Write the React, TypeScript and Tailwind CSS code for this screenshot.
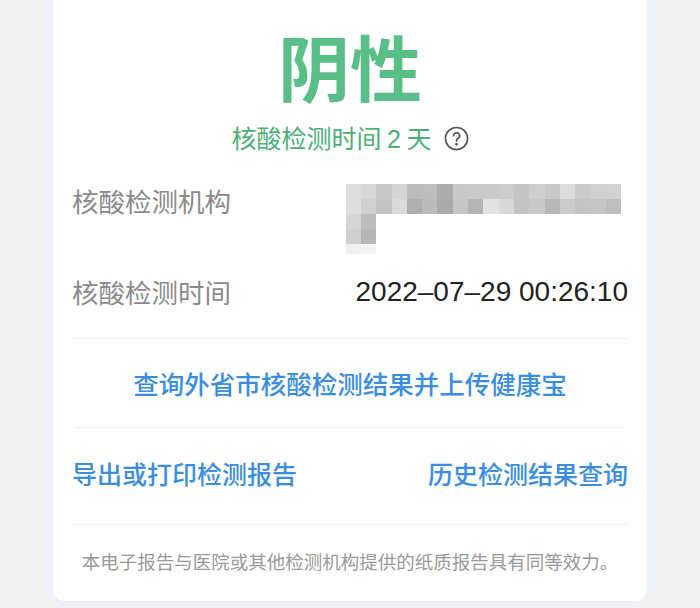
const cjk = { fontFamily: '"Noto Sans CJK SC", "Noto Sans", sans-serif' };
const latin = { fontFamily: '"Liberation Sans", Arial, sans-serif' };

const mosaicTop = [
  ["#dcdcdc", "#d8d8d8", "#c8c8c8", "#d4d4d4", "#bcbcbc", "#bdbdbd", "#acacac", "#c8c8c8", "#c9c9c9", "#cacaca", "#cccccc", "#c4c4c4", "#cfcfcf", "#c8c8c8", "#dcdcdc", "#cacaca", "#d0d0d0", "#d2d2d2"],
  ["#dedede", "#d0d0d0", "#c4c4c4", "#dadada", "#aeaeae", "#bbbbbb", "#aaaaaa", "#c6c6c6", "#b4b4b4", "#e2e2e2", "#d8d8d8", "#c4c4c4", "#c8c8c8", "#b8b8b8", "#cbcbcb", "#c4c4c4", "#c6c6c6", "#bdbdbd"],
];
const mosaicLeft = [
  ["#d6d6d6", "#bcbcbc"],
  ["#cfcfcf", "#b6b6b6"],
];

function Mosaic() {
  return (
    <div className="flex flex-col">
      {mosaicTop.map((row, i) => (
        <div key={i} className="flex">
          {row.map((c, j) => (
            <div key={j} className="h-[15px] w-[15.3px]" style={{ backgroundColor: c }} />
          ))}
        </div>
      ))}
      {mosaicLeft.map((row, i) => (
        <div key={i} className="flex">
          {row.map((c, j) => (
            <div key={j} className="h-[15px] w-[15.3px]" style={{ backgroundColor: c }} />
          ))}
        </div>
      ))}
      <div className="flex">
        <div className="h-[10px] w-[15.3px] bg-[#f0f0f0]" />
        <div className="h-[10px] w-[15.3px] bg-[#f3f3f3]" />
      </div>
    </div>
  );
}

function HelpIcon() {
  return (
    <svg width="25" height="25" viewBox="0 0 24 24" fill="none" stroke="#555" strokeWidth="1.6" strokeLinecap="round">
      <circle cx="12" cy="12" r="10.6" />
      <path d="M9.2 9.3a2.9 2.9 0 1 1 4.2 2.6c-.9.5-1.4 1.1-1.4 2.1v.5" />
      <circle cx="12" cy="17.6" r="0.6" fill="#555" />
    </svg>
  );
}

export default function App() {
  return (
    <div className="h-[608px] w-full overflow-hidden bg-[#f0f0f0]" style={cjk}>
      <div className="mx-[43px] rounded-b-[20px] bg-[#eef0f6] px-[10px] pb-[5px]">
        <div className="flex flex-col rounded-b-[12px] bg-white px-[19px]">
          <div className="pt-[29px] text-center text-[72px] font-bold leading-[72px] text-[#5abf87]">阴性</div>

          <div className="mt-[20px] flex items-center justify-center gap-[12px] text-[25px] leading-[32px] text-[#4dae77]">
            <span>
              核酸检测时间 <span style={latin}>2</span> 天
            </span>
            <HelpIcon />
          </div>

          <div className="mt-[28px] flex justify-between">
            <span className="text-[26.5px] leading-[36px] text-[#8a8a8a]">核酸检测机构</span>
            <div className="pr-[7px] pt-[1px]">
              <Mosaic />
            </div>
          </div>

          <div className="mt-[20px] flex items-center justify-between">
            <span className="text-[26.5px] leading-[36px] text-[#8a8a8a]">核酸检测时间</span>
            <span className="text-[28px] leading-[36px] text-[#222]" style={latin}>
              2022–07–29 00:26:10
            </span>
          </div>

          <div className="mt-[28px] h-px bg-[#f0f0f0]" />

          <div className="flex h-[88px] items-center justify-center text-[25.5px] font-medium text-[#3a8de0]">
            查询外省市核酸检测结果并上传健康宝
          </div>

          <div className="mx-[3px] h-px bg-[#f0f0f0]" />

          <div className="flex h-[96px] items-center justify-between pb-[5px] text-[25px] font-medium text-[#3a8de0]">
            <span>导出或打印检测报告</span>
            <span>历史检测结果查询</span>
          </div>

          <div className="h-px bg-[#f0f0f0]" />

          <div className="flex h-[76px] items-center justify-center pb-[3px] text-[18.5px] text-[#999]">
            本电子报告与医院或其他检测机构提供的纸质报告具有同等效力。
          </div>
        </div>
      </div>
    </div>
  );
}
